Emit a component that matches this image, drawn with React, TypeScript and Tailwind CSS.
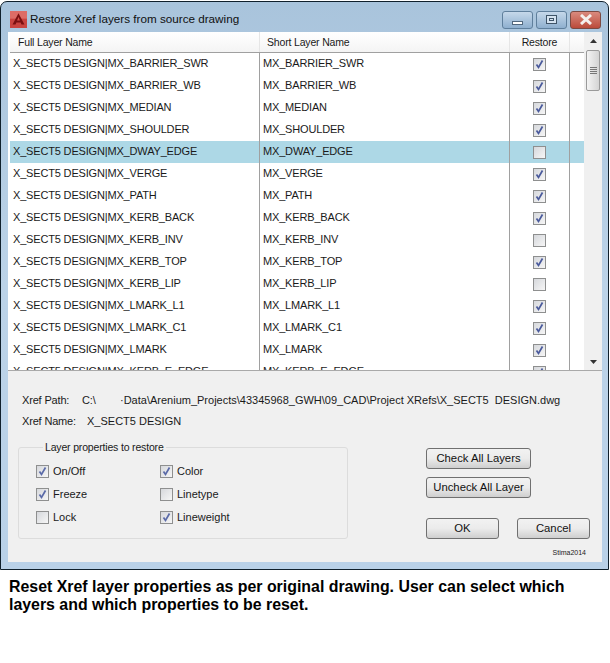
const rows = [
  ["MX_BARRIER_SWR", true],
  ["MX_BARRIER_WB", true],
  ["MX_MEDIAN", true],
  ["MX_SHOULDER", true],
  ["MX_DWAY_EDGE", false],
  ["MX_VERGE", true],
  ["MX_PATH", true],
  ["MX_KERB_BACK", true],
  ["MX_KERB_INV", false],
  ["MX_KERB_TOP", true],
  ["MX_KERB_LIP", false],
  ["MX_LMARK_L1", true],
  ["MX_LMARK_C1", true],
  ["MX_LMARK", true],
  ["MX_KERB_E_EDGE", true],
] as const;

function Check({ on, dim }: { on: boolean; dim?: boolean }) {
  return (
    <span className="flex h-[13px] w-[13px] shrink-0 items-center justify-center border border-[#8e8f8f] bg-gradient-to-br from-[#d6d8dc] to-[#f6f6f6]">
      {on && (
        <svg width="11" height="11" viewBox="0 0 11 11">
          <path d="M2.5 5.5 L4.5 8.5 L8.5 1.5" fill="none" stroke={dim ? "#5a6aa8" : "#4a5a9c"} strokeWidth="1.7" />
        </svg>
      )}
    </span>
  );
}

function Option({ label, on }: { label: string; on: boolean }) {
  return (
    <div className="flex h-[23px] items-center gap-[4px] tracking-normal">
      <Check on={on} dim />
      <span className="pb-px">{label}</span>
    </div>
  );
}

function Btn({ label, w }: { label: string; w: string }) {
  return (
    <button className={`${w} h-[21px] rounded-[3px] border border-[#707070] bg-gradient-to-b from-[#f2f2f2] via-[#ebebeb] to-[#cfcfcf] text-center text-[11.3px] tracking-normal text-[#111]`}>
      {label}
    </button>
  );
}

export default function App() {
  return (
    <div className="h-[663px] w-[610px] overflow-hidden bg-white font-['Liberation_Sans',sans-serif] text-[11px] tracking-[-0.17px] text-[#1a1a1a]">
      <div className="mt-px flex h-[569px] w-[609px] flex-col rounded-t-[7px] border border-[#10202c] bg-gradient-to-b from-[#a9c4dc] via-[#bcd3e8] to-[#b9d1e8] pb-[7px] pl-[7px] pr-[6px]">
        {/* title bar */}
        <div className="flex h-[30px] shrink-0 items-center">
          <svg width="17" height="17" viewBox="0 0 20 20" className="ml-[2px] mt-[4px]">
            <rect width="20" height="20" fill="#c9433f" />
            <rect width="20" height="9" fill="#dd6c66" />
            <path d="M10 2.5 L17 16 H13.5 L12.5 13.5 H7.5 L6.5 16 H3 Z" fill="#7a0f10" />
            <path d="M10 7 L8.3 11.2 H11.7 Z" fill="#d8504a" />
          </svg>
          <span className="ml-[3px] mt-[4px] text-[11.7px] tracking-normal text-[#101010]">Restore Xref layers from source drawing</span>
          <div className="ml-auto mr-[1px] mt-[5px] flex gap-[3px]">
            <div className="flex h-[18px] w-[31px] items-end justify-center rounded-[3px] border border-[#5f7f9c] bg-gradient-to-b from-[#c5d8ea] to-[#8fb0cf] pb-[3px]">
              <span className="h-[4px] w-[11px] border border-[#51677d] bg-white" />
            </div>
            <div className="flex h-[18px] w-[31px] items-center justify-center rounded-[3px] border border-[#5f7f9c] bg-gradient-to-b from-[#c5d8ea] to-[#8fb0cf]">
              <span className="flex h-[9px] w-[11px] items-center justify-center border border-[#3f5468] bg-[#d5e3f0]">
                <span className="h-[3px] w-[5px] border border-[#3f5468]" />
              </span>
            </div>
            <div className="flex h-[18px] w-[31px] items-center justify-center rounded-[3px] border border-[#7c4a42] bg-gradient-to-b from-[#d98a7e] to-[#bb4a3a]">
              <svg width="14" height="11" viewBox="0 0 14 11">
                <path d="M2 1 L12 10 M12 1 L2 10" stroke="#f4f0ee" strokeWidth="3" />
              </svg>
            </div>
          </div>
        </div>

        {/* client area */}
        <div className="flex min-h-0 flex-1 flex-col bg-[#f0f0f0]">
          <div className="flex h-[339px] shrink-0 overflow-hidden border-b border-[#a9a9a9] bg-white pl-[2px]">
            <div className="w-[574px] shrink-0">
              <div className="flex h-[21px] border-b border-[#a0a0a0] bg-gradient-to-b from-white to-[#f4f4f4] text-[10.5px]">
                <div className="w-[250px] border-r border-[#e6e6e6] pl-[8px] pt-[3px]">Full Layer Name</div>
                <div className="w-[250px] border-r border-[#e6e6e6] pl-[7px] pt-[3px]">Short Layer Name</div>
                <div className="w-[60px] border-r border-[#e6e6e6] pt-[3px] text-center">Restore</div>
              </div>
              {rows.map(([name, on]) => {
                const sel = name === "MX_DWAY_EDGE";
                return (
                  <div key={name} className={`flex h-[22px] items-center ${sel ? "bg-[#add8e6]" : ""}`}>
                    <div className="flex h-full w-[250px] items-center border-r border-[#a0a0a0] pb-px pl-[3px]">X_SECT5 DESIGN|{name}</div>
                    <div className="flex h-full w-[250px] items-center border-r border-[#a0a0a0] pb-px pl-[3px]">{name}</div>
                    <div className="flex h-full w-[60px] items-center justify-center border-r border-[#a0a0a0]">
                      <Check on={on} />
                    </div>
                    <div className="h-full flex-1" />
                  </div>
                );
              })}
            </div>
            {/* scrollbar */}
            <div className="flex w-[18px] shrink-0 flex-col items-center bg-[#f0f0f0]">
              <svg width="9" height="17" viewBox="0 0 9 17" className="shrink-0">
                <path d="M1 11 L4.5 7 L8 11 Z" fill="#333" />
              </svg>
              <div className="mt-px flex h-[41px] w-[14px] shrink-0 flex-col items-center justify-center gap-[1px] rounded-[2px] border border-[#9a9a9a] bg-gradient-to-r from-[#f4f4f4] to-[#d4d4d4]">
                <span className="h-px w-[7px] bg-[#777]" />
                <span className="h-px w-[7px] bg-[#777]" />
                <span className="h-px w-[7px] bg-[#777]" />
                <span className="h-px w-[7px] bg-[#777]" />
              </div>
              <svg width="9" height="17" viewBox="0 0 9 17" className="mt-auto shrink-0">
                <path d="M1 7 L8 7 L4.5 11 Z" fill="#333" />
              </svg>
            </div>
          </div>

          <div className="flex-1 pl-[14px] pt-[22px]">
            <div className="flex h-[14px] items-center whitespace-pre">
              <span className="w-[60px] shrink-0">Xref Path:</span>
              <span className="w-[38px] shrink-0">C:\</span>
              <span className="tracking-normal">·Data\Arenium_Projects\43345968_GWH\09_CAD\Project XRefs\X_SECT5  DESIGN.dwg</span>
            </div>
            <div className="mt-[7px] flex h-[14px] items-center">
              <span className="w-[65px]">Xref Name:</span>
              <span className="tracking-normal">X_SECT5 DESIGN</span>
            </div>

            <div className="-ml-[4px] mt-[12px] flex">
              <fieldset className="h-[99px] w-[330px] rounded-[3px] border border-[#dcdcdc] pl-[17px]">
                <legend className="ml-[7px] px-[2px] text-[10.5px]">Layer properties to restore</legend>
                <div className="mt-[4px] flex">
                  <div className="w-[124px]">
                    <Option label="On/Off" on />
                    <Option label="Freeze" on />
                    <Option label="Lock" on={false} />
                  </div>
                  <div>
                    <Option label="Color" on />
                    <Option label="Linetype" on={false} />
                    <Option label="Lineweight" on />
                  </div>
                </div>
              </fieldset>
              <div className="ml-[78px] flex flex-col items-start pt-[8px]">
                <Btn label="Check All Layers" w="w-[105px]" />
                <div className="mt-[8px]">
                  <Btn label="Uncheck All Layer" w="w-[105px]" />
                </div>
                <div className="mt-[20px] flex gap-[18px]">
                  <Btn label="OK" w="w-[73px]" />
                  <Btn label="Cancel" w="w-[73px]" />
                </div>
                <div className="mt-[9px] w-[160px] text-right text-[7px] tracking-normal">Stima2014</div>
              </div>
            </div>
          </div>
        </div>
      </div>
      <p className="ml-[9px] mt-[8px] w-[570px] text-[15.9px] font-bold leading-[18px] tracking-normal text-black">
        Reset Xref layer properties as per original drawing. User can select which layers and which properties to be reset.
      </p>
    </div>
  );
}
